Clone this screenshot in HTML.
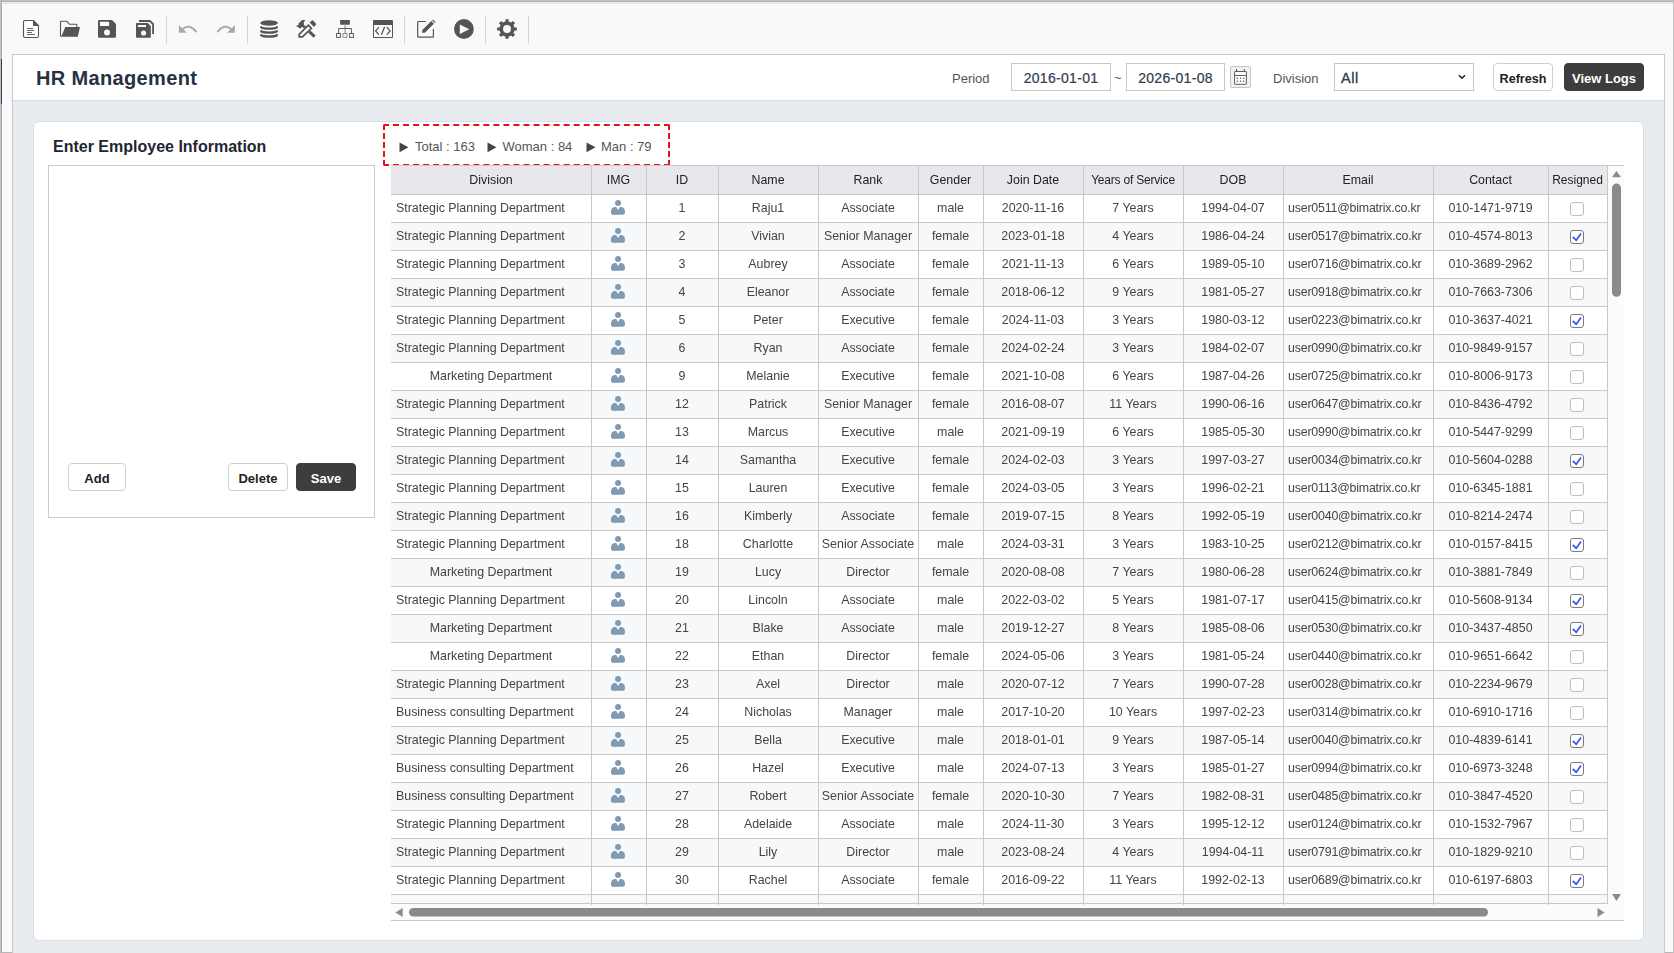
<!DOCTYPE html><html><head><meta charset="utf-8"><style>
*{box-sizing:border-box;margin:0;padding:0}
html,body{width:1674px;height:953px;overflow:hidden;background:#f8f9fa;font-family:"Liberation Sans",sans-serif;color:#333}
.a{position:absolute}
#frameT{position:absolute;left:0;top:0;width:1674px;height:2px;background:linear-gradient(#c3c3c3 50%,#b0b0b0 50%)}
#frameT2{position:absolute;left:2px;top:2px;width:1672px;height:1px;background:#e8eef8}
#frameT3{position:absolute;left:2px;top:3px;width:1672px;height:1px;background:#e3e5e3}
#frameL{position:absolute;left:0;top:0;width:2px;height:953px;background:linear-gradient(90deg,#c3c3c3 50%,#a9a9a9 50%)}
#frameL2{position:absolute;left:2px;top:2px;width:1px;height:950px;background:#fdfdfd}
#frameB{position:absolute;left:0;top:952px;width:1674px;height:1px;background:#b8b8b8}
#frameR{position:absolute;left:1673px;top:0;width:1px;height:953px;background:#c3c3c3}
#leftdark{position:absolute;left:1px;top:59px;width:1px;height:45px;background:#333a44}
#panel{position:absolute;left:12px;top:54px;width:1653px;height:899px;border-left:1px solid #c8c8c8;border-right:1px solid #c8c8c8;border-top:1px solid #c8c8c8;background:#e9ecef}
#hdr{position:absolute;left:13px;top:55px;width:1651px;height:46px;background:#fff;border-bottom:1px solid #d6dce6}
#card{position:absolute;left:33px;top:121px;width:1611px;height:820px;background:#fff;border:1px solid #d6dce8;border-radius:6px}
.t{position:absolute;white-space:nowrap;line-height:1}
.title{left:36px;top:68px;font-size:20px;font-weight:bold;color:#263142;letter-spacing:0.35px}
.lbl{font-size:13px;color:#555}
.inp{position:absolute;border:1px solid #c8c8c8;background:#fff;height:28px;top:63px}
.date{font-size:14px;color:#2f3b4e;line-height:28px;text-align:center;letter-spacing:0.3px;-webkit-text-stroke:0.2px #2f3b4e}
.btn{position:absolute;height:28px;border-radius:4px;font-size:13px;font-weight:bold;line-height:29px;text-align:center}
.bw{border:1px solid #cfcfcf;background:#fff;color:#222}
.bd{border:1px solid #3d3d3d;background:#3d3d3d;color:#fff}
#grid{position:absolute;left:391px;top:166px;width:1233px;height:754px;background:#fbfbfb}
.hl{position:absolute;height:1px;background:#c8c8c8}
.vl{position:absolute;width:1px;background:#c8c8c8}
.c{position:absolute;height:28px;line-height:28px;font-size:12.4px;color:#444;white-space:nowrap;text-align:center;overflow:hidden}
.h{color:#222;line-height:28px}
.cb{position:absolute;width:14px;height:14px;border:1px solid #bdbdbd;border-radius:3px;background:#fff}
.cb.on{border-color:#7a7a7a}
</style></head><body>
<div id="frameT"></div><div id="frameT2"></div><div id="frameT3"></div><div id="frameL"></div><div id="frameL2"></div><div id="frameB"></div><div id="frameR"></div>
<svg class="abs" style="left:0;top:0" width="560" height="54" viewBox="0 0 560 54">
<g fill="#555" stroke="none">
<!-- new doc -->
<path d="M23.5,22 Q23.5,20.5 25,20.5 L33.5,20.5 L38.5,25.5 L38.5,36 Q38.5,37.5 37,37.5 L25,37.5 Q23.5,37.5 23.5,36 Z" fill="#fff" stroke="#555" stroke-width="1.1"/>
<path d="M33,20 L39,26 L33,26 Z"/>
<g stroke="#555" stroke-width="0.9"><path d="M27,28.5H33M27,30.5H34M27,32.5H32M27,34.5H35"/></g>
<!-- folder -->
<path d="M60.5,36.5 L60.5,22 Q60.5,21.3 61.3,21.3 L66.8,21.3 L69.5,24.3 L76.3,24.3 Q76.8,24.3 76.8,24.8 L76.8,27.5" fill="none" stroke="#555" stroke-width="1.1"/>
<path d="M65.3,27.1 L80,27.1 L77.8,36.8 L60.8,36.8 L61.5,36 Z"/>
<path d="M60.5,36 L60.5,36.8 L62,36.8 Z"/>
<!-- save -->
<path d="M98,21.3 Q98,20 99.3,20 L112,20 L116,24 L116,36.5 Q116,37.8 114.7,37.8 L99.3,37.8 Q98,37.8 98,36.5 Z M99.9,21.7 L99.9,26.1 L109.1,26.1 L109.1,21.7 Z M104,32.4 A3,3 0 1 0 110,32.4 A3,3 0 1 0 104,32.4 Z" fill-rule="evenodd"/>
<!-- save all -->
<path d="M136,23.8 Q136,23.1 136.7,23.1 L147.8,23.1 L150.8,26.1 L150.8,37.1 Q150.8,37.8 150.1,37.8 L136.7,37.8 Q136,37.8 136,37.1 Z M137.9,25 L137.9,27 L146,27 L146,25 Z M141,33 A2.6,2.6 0 1 0 146.2,33 A2.6,2.6 0 1 0 141,33 Z" fill-rule="evenodd"/>
<path d="M139,20.1 L150.3,20.1 L154,23.8 L154,33.9 L152.2,33.9 L152.2,24.6 L149.6,21.9 L139,21.9 Z"/>
<!-- undo -->
<g fill="#aaa"><path d="M178.9,24.9 L178.9,32.8 L186.8,32.8 Z"/>
<path d="M182.5,29.2 Q189,23 196.5,32 " fill="none" stroke="#aaa" stroke-width="2"/>
<!-- redo -->
<path d="M234.9,24.9 L234.9,32.8 L227,32.8 Z"/>
<path d="M231.3,29.2 Q224.8,23 217.3,32 " fill="none" stroke="#aaa" stroke-width="2"/></g>
<!-- database -->
<ellipse cx="269.05" cy="22.95" rx="8.85" ry="2.8"/>
<g fill="none" stroke="#555" stroke-width="2.3" stroke-linecap="round"><path d="M261.2,27.2 A7.9,1.6 0 0 0 276.9,27.2"/><path d="M261.2,31.15 A7.9,1.6 0 0 0 276.9,31.15"/><path d="M261.2,35.1 A7.9,1.6 0 0 0 276.9,35.1"/></g>
<!-- tools -->
<path d="M302.96,27.58 L305.04,25.42 L315.64,35.52 L313.56,37.68 Z"/>
<path d="M296,26.1 L298.5,25 L298.5,23.6 L302,20.1 L305,20.1 L305,20.8 L303.8,22.1 L303.9,24.7 L305,25.8 L303.4,27.5 L302,26.9 L299.8,28.8 L299.3,28 Z"/>
<path d="M298.3,37.8 L298.3,34 L308.3,23.9 L312.6,28.3 L302.8,37.8 Z" fill="#fff"/>
<path d="M298.3,37.8 L298.3,34 L308.3,23.9 L312.6,28.3 L302.8,37.8 Z M300,36.1 L302.1,36.1 L310.2,28.3 L308.3,26.4 L300,34.7 Z" fill-rule="evenodd"/>
<path d="M309.6,22.5 L312,20.5 Q312.6,20.2 313.1,20.6 L315.9,23.6 Q316.3,24.1 315.9,24.7 L314,26.9 Z"/>
<!-- sitemap -->
<rect x="340.1" y="20" width="9.8" height="4.7" rx="0.6"/>
<rect x="344.5" y="24.7" width="1.2" height="8.5" fill="#999"/>
<g fill="none" stroke="#555" stroke-width="0.95"><path d="M338.6,33 V28.5 H351.4 V33"/>
<rect x="336.6" y="33.5" width="3.8" height="3.9"/><rect x="349.6" y="33.5" width="3.8" height="3.9"/></g>
<rect x="343" y="33.5" width="3.9" height="3.9" fill="none" stroke="#8a8a8a" stroke-width="0.95"/>
<!-- code window -->
<path d="M373,21 Q373,20 374,20 L392,20 Q393,20 393,21 L393,37 Q393,38 392,38 L374,38 Q373,38 373,37 Z M374,25 L374,37 L392,37 L392,25 Z" fill-rule="evenodd"/>
<g fill="none" stroke="#555" stroke-width="1.25"><path d="M378.9,27.1 L375.6,30.9 L378.9,34.7"/><path d="M384.6,27.1 L381.4,34.7"/><path d="M386.8,27.1 L390.1,30.9 L386.8,34.7"/></g>
<!-- edit -->
<path d="M425.8,21.5 L418.5,21.5 Q417.7,21.5 417.7,22.3 L417.7,36.4 Q417.7,37.2 418.5,37.2 L432.6,37.2 Q433.4,37.2 433.4,36.4 L433.4,29.1" fill="none" stroke="#555" stroke-width="1.2"/>
<path d="M422.2,32.7 L422.3,30.1 L431.3,21.1 L433.9,23.7 L424.9,32.7 Z"/>
<path d="M432,20.3 L432.9,19.5 L435.6,22.2 L434.7,23 Z"/>
<!-- play -->
<path d="M454,29 A9.9,9.9 0 1 0 473.8,29 A9.9,9.9 0 1 0 454,29 Z M459.8,24.6 L459.8,34 L469.2,29.3 Z" fill-rule="evenodd"/>
<!-- gear -->
<path fill-rule="evenodd" d="M505.40,21.57 L505.40,19.13 L508.60,19.13 L508.60,21.57 A7.60,7.60 0 0 1 511.12,22.62 L512.85,20.89 L515.11,23.15 L513.38,24.88 A7.60,7.60 0 0 1 514.43,27.40 L516.87,27.40 L516.87,30.60 L514.43,30.60 A7.60,7.60 0 0 1 513.38,33.12 L515.11,34.85 L512.85,37.11 L511.12,35.38 A7.60,7.60 0 0 1 508.60,36.43 L508.60,38.87 L505.40,38.87 L505.40,36.43 A7.60,7.60 0 0 1 502.88,35.38 L501.15,37.11 L498.89,34.85 L500.62,33.12 A7.60,7.60 0 0 1 499.57,30.60 L497.13,30.60 L497.13,27.40 L499.57,27.40 A7.60,7.60 0 0 1 500.62,24.88 L498.89,23.15 L501.15,20.89 L502.88,22.62 A7.60,7.60 0 0 1 505.40,21.57 Z M503.05,29.00 A3.95,3.95 0 1 0 510.95,29.00 A3.95,3.95 0 1 0 503.05,29.00 Z"/>
</g>
<g fill="#d4d4d4"><rect x="166" y="16" width="1" height="28"/><rect x="247" y="16" width="1" height="28"/><rect x="404" y="16" width="1" height="28"/><rect x="485" y="16" width="1" height="28"/><rect x="528" y="16" width="1" height="28"/></g>
</svg>
<div id="panel"></div><div id="hdr"></div><div id="leftdark"></div><div id="card"></div>
<div class="t title">HR Management</div>
<div class="t lbl" style="left:952px;top:72px">Period</div>
<div class="inp date" style="left:1011px;width:100px">2016-01-01</div>
<div class="t lbl" style="left:1114px;top:71px">~</div>
<div class="inp date" style="left:1126px;width:99px">2026-01-08</div>
<div class="a" style="left:1230px;top:66px;width:21px;height:22px;border:1px solid #c6c6c6;border-radius:2px;background:#f1f1f3"></div>
<svg class="a" style="left:1230px;top:66px" width="21" height="22" viewBox="0 0 21 22"><rect x="4.6" y="5.5" width="11.8" height="12.8" rx="0.4" fill="#fff" stroke="#555" stroke-width="0.95"/><rect x="4.6" y="9" width="11.8" height="0.9" fill="#555"/><rect x="6" y="3.1" width="1.1" height="2.6" fill="#555"/><rect x="13.8" y="3.1" width="1.1" height="2.6" fill="#555"/><g fill="#555"><circle cx="7.3" cy="12.2" r="0.75"/><circle cx="10.5" cy="12.2" r="0.75"/><circle cx="13.7" cy="12.2" r="0.75"/><circle cx="7.3" cy="15.2" r="0.75"/><circle cx="10.5" cy="15.2" r="0.75"/><circle cx="13.7" cy="15.2" r="0.75"/></g></svg>
<div class="t lbl" style="left:1273px;top:72px">Division</div>
<div class="inp" style="left:1334px;width:140px;border-color:#c4c4c4"></div>
<div class="t" style="left:1341px;top:71px;font-size:14.5px;color:#2f3b4e;letter-spacing:0.6px;-webkit-text-stroke:0.35px #2f3b4e">All</div>
<svg class="a" style="left:1456px;top:72px" width="12" height="10" viewBox="0 0 12 10"><path d="M3,3.2 L6,6.2 L9,3.2" fill="none" stroke="#222" stroke-width="1.6"/></svg>
<div class="btn bw" style="left:1493px;top:63px;width:60px;font-size:12.6px;line-height:30px">Refresh</div>
<div class="btn bd" style="left:1564px;top:63px;width:80px">View Logs</div>
<div class="t" style="left:53px;top:139px;font-size:16px;font-weight:bold;color:#1f2533">Enter Employee Information</div>
<div class="a" style="left:48px;top:165px;width:327px;height:353px;border:1px solid #cccccc"></div>
<div class="btn bw" style="left:68px;top:463px;width:58px">Add</div>
<div class="btn bw" style="left:228px;top:463px;width:60px">Delete</div>
<div class="btn bd" style="left:296px;top:463px;width:60px">Save</div>
<div class="a" style="left:383px;top:124px;width:287px;height:42px;border:2px dashed #e5141c;border-radius:2px"></div>
<svg class="a" style="left:398.5px;top:142px" width="10" height="11" viewBox="0 0 10 11"><path d="M0.5,0.5 L9.5,5.3 L0.5,10.2 Z" fill="#444"/></svg>
<div class="t" style="left:415px;top:140px;font-size:13px;color:#555">Total : 163</div>
<svg class="a" style="left:487px;top:142px" width="10" height="11" viewBox="0 0 10 11"><path d="M0.5,0.5 L9.5,5.3 L0.5,10.2 Z" fill="#444"/></svg>
<div class="t" style="left:502.5px;top:140px;font-size:13px;color:#555">Woman : 84</div>
<svg class="a" style="left:585.5px;top:142px" width="10" height="11" viewBox="0 0 10 11"><path d="M0.5,0.5 L9.5,5.3 L0.5,10.2 Z" fill="#444"/></svg>
<div class="t" style="left:601px;top:140px;font-size:13px;color:#555">Man : 79</div>
<div id="grid"></div>
<div class="hl" style="left:391px;top:165px;width:1233px"></div>
<div class="hl" style="left:391px;top:920px;width:1233px"></div>
<div class="a" style="left:391px;top:166px;width:1216px;height:28px;background:#e8e8ec"></div>
<div class="a" style="left:391px;top:195px;width:1216px;height:27px;background:#ffffff"></div>
<div class="a" style="left:391px;top:223px;width:1216px;height:27px;background:#f7f8fa"></div>
<div class="a" style="left:391px;top:251px;width:1216px;height:27px;background:#ffffff"></div>
<div class="a" style="left:391px;top:279px;width:1216px;height:27px;background:#f7f8fa"></div>
<div class="a" style="left:391px;top:307px;width:1216px;height:27px;background:#ffffff"></div>
<div class="a" style="left:391px;top:335px;width:1216px;height:27px;background:#f7f8fa"></div>
<div class="a" style="left:391px;top:363px;width:1216px;height:27px;background:#ffffff"></div>
<div class="a" style="left:391px;top:391px;width:1216px;height:27px;background:#f7f8fa"></div>
<div class="a" style="left:391px;top:419px;width:1216px;height:27px;background:#ffffff"></div>
<div class="a" style="left:391px;top:447px;width:1216px;height:27px;background:#f7f8fa"></div>
<div class="a" style="left:391px;top:475px;width:1216px;height:27px;background:#ffffff"></div>
<div class="a" style="left:391px;top:503px;width:1216px;height:27px;background:#f7f8fa"></div>
<div class="a" style="left:391px;top:531px;width:1216px;height:27px;background:#ffffff"></div>
<div class="a" style="left:391px;top:559px;width:1216px;height:27px;background:#f7f8fa"></div>
<div class="a" style="left:391px;top:587px;width:1216px;height:27px;background:#ffffff"></div>
<div class="a" style="left:391px;top:615px;width:1216px;height:27px;background:#f7f8fa"></div>
<div class="a" style="left:391px;top:643px;width:1216px;height:27px;background:#ffffff"></div>
<div class="a" style="left:391px;top:671px;width:1216px;height:27px;background:#f7f8fa"></div>
<div class="a" style="left:391px;top:699px;width:1216px;height:27px;background:#ffffff"></div>
<div class="a" style="left:391px;top:727px;width:1216px;height:27px;background:#f7f8fa"></div>
<div class="a" style="left:391px;top:755px;width:1216px;height:27px;background:#ffffff"></div>
<div class="a" style="left:391px;top:783px;width:1216px;height:27px;background:#f7f8fa"></div>
<div class="a" style="left:391px;top:811px;width:1216px;height:27px;background:#ffffff"></div>
<div class="a" style="left:391px;top:839px;width:1216px;height:27px;background:#f7f8fa"></div>
<div class="a" style="left:391px;top:867px;width:1216px;height:27px;background:#ffffff"></div>
<div class="a" style="left:391px;top:895px;width:1216px;height:8px;background:#f7f8fa"></div>
<div class="hl" style="left:391px;top:194px;width:1218px"></div>
<div class="hl" style="left:391px;top:222px;width:1218px"></div>
<div class="hl" style="left:391px;top:250px;width:1218px"></div>
<div class="hl" style="left:391px;top:278px;width:1218px"></div>
<div class="hl" style="left:391px;top:306px;width:1218px"></div>
<div class="hl" style="left:391px;top:334px;width:1218px"></div>
<div class="hl" style="left:391px;top:362px;width:1218px"></div>
<div class="hl" style="left:391px;top:390px;width:1218px"></div>
<div class="hl" style="left:391px;top:418px;width:1218px"></div>
<div class="hl" style="left:391px;top:446px;width:1218px"></div>
<div class="hl" style="left:391px;top:474px;width:1218px"></div>
<div class="hl" style="left:391px;top:502px;width:1218px"></div>
<div class="hl" style="left:391px;top:530px;width:1218px"></div>
<div class="hl" style="left:391px;top:558px;width:1218px"></div>
<div class="hl" style="left:391px;top:586px;width:1218px"></div>
<div class="hl" style="left:391px;top:614px;width:1218px"></div>
<div class="hl" style="left:391px;top:642px;width:1218px"></div>
<div class="hl" style="left:391px;top:670px;width:1218px"></div>
<div class="hl" style="left:391px;top:698px;width:1218px"></div>
<div class="hl" style="left:391px;top:726px;width:1218px"></div>
<div class="hl" style="left:391px;top:754px;width:1218px"></div>
<div class="hl" style="left:391px;top:782px;width:1218px"></div>
<div class="hl" style="left:391px;top:810px;width:1218px"></div>
<div class="hl" style="left:391px;top:838px;width:1218px"></div>
<div class="hl" style="left:391px;top:866px;width:1218px"></div>
<div class="hl" style="left:391px;top:894px;width:1218px"></div>
<div class="hl" style="left:391px;top:903px;width:1217px"></div>
<div class="vl" style="left:591px;top:166px;height:739px"></div>
<div class="vl" style="left:646px;top:166px;height:739px"></div>
<div class="vl" style="left:718px;top:166px;height:739px"></div>
<div class="vl" style="left:818px;top:166px;height:739px"></div>
<div class="vl" style="left:918px;top:166px;height:739px"></div>
<div class="vl" style="left:983px;top:166px;height:739px"></div>
<div class="vl" style="left:1083px;top:166px;height:739px"></div>
<div class="vl" style="left:1183px;top:166px;height:739px"></div>
<div class="vl" style="left:1283px;top:166px;height:739px"></div>
<div class="vl" style="left:1433px;top:166px;height:739px"></div>
<div class="vl" style="left:1548px;top:166px;height:739px"></div>
<div class="vl" style="left:1607px;top:166px;height:737px"></div>
<div style="position:absolute;left:0;top:0;width:1674px;height:953px;will-change:transform">
<div class="c h" style="left:391px;top:166px;width:200px">Division</div>
<div class="c h" style="left:591px;top:166px;width:55px">IMG</div>
<div class="c h" style="left:646px;top:166px;width:72px">ID</div>
<div class="c h" style="left:718px;top:166px;width:100px">Name</div>
<div class="c h" style="left:818px;top:166px;width:100px">Rank</div>
<div class="c h" style="left:918px;top:166px;width:65px">Gender</div>
<div class="c h" style="left:983px;top:166px;width:100px">Join Date</div>
<div class="c h" style="left:1083px;top:166px;width:100px;font-size:12px;letter-spacing:-0.2px">Years of Service</div>
<div class="c h" style="left:1183px;top:166px;width:100px">DOB</div>
<div class="c h" style="left:1283px;top:166px;width:150px">Email</div>
<div class="c h" style="left:1433px;top:166px;width:115px">Contact</div>
<div class="c h" style="left:1548px;top:166px;width:59px;font-size:12px">Resigned</div>
<div class="c" style="left:391px;top:194px;width:200px;text-align:left;padding-left:5px">Strategic Planning Department</div>
<svg class="a" style="left:610px;top:199px" width="16" height="17" viewBox="0 0 16 17"><circle cx="8.05" cy="3.9" r="3.0" fill="#7f9bb3"/><path d="M0.9,13.5 Q0.9,8.2 4.5,8.1 L6.2,8.1 L8.05,10.9 L9.9,8.1 L11.4,8.1 Q15,8.2 15,13.5 Q15,15.7 13,15.7 L2.9,15.7 Q0.9,15.7 0.9,13.5 Z" fill="#7f9bb3"/></svg>
<div class="c" style="left:646px;top:194px;width:72px">1</div>
<div class="c" style="left:718px;top:194px;width:100px">Raju1</div>
<div class="c" style="left:818px;top:194px;width:100px">Associate</div>
<div class="c" style="left:918px;top:194px;width:65px">male</div>
<div class="c" style="left:983px;top:194px;width:100px">2020-11-16</div>
<div class="c" style="left:1083px;top:194px;width:100px">7 Years</div>
<div class="c" style="left:1183px;top:194px;width:100px">1994-04-07</div>
<div class="c" style="left:1283px;top:194px;width:150px;text-align:left;padding-left:5px;letter-spacing:-0.2px">user0511@bimatrix.co.kr</div>
<div class="c" style="left:1433px;top:194px;width:115px">010-1471-9719</div>
<div class="cb" style="left:1570px;top:202px"></div>
<div class="c" style="left:391px;top:222px;width:200px;text-align:left;padding-left:5px">Strategic Planning Department</div>
<svg class="a" style="left:610px;top:227px" width="16" height="17" viewBox="0 0 16 17"><circle cx="8.05" cy="3.9" r="3.0" fill="#7f9bb3"/><path d="M0.9,13.5 Q0.9,8.2 4.5,8.1 L6.2,8.1 L8.05,10.9 L9.9,8.1 L11.4,8.1 Q15,8.2 15,13.5 Q15,15.7 13,15.7 L2.9,15.7 Q0.9,15.7 0.9,13.5 Z" fill="#7f9bb3"/></svg>
<div class="c" style="left:646px;top:222px;width:72px">2</div>
<div class="c" style="left:718px;top:222px;width:100px">Vivian</div>
<div class="c" style="left:818px;top:222px;width:100px">Senior Manager</div>
<div class="c" style="left:918px;top:222px;width:65px">female</div>
<div class="c" style="left:983px;top:222px;width:100px">2023-01-18</div>
<div class="c" style="left:1083px;top:222px;width:100px">4 Years</div>
<div class="c" style="left:1183px;top:222px;width:100px">1986-04-24</div>
<div class="c" style="left:1283px;top:222px;width:150px;text-align:left;padding-left:5px;letter-spacing:-0.2px">user0517@bimatrix.co.kr</div>
<div class="c" style="left:1433px;top:222px;width:115px">010-4574-8013</div>
<div class="cb on" style="left:1570px;top:230px"></div>
<svg class="a" style="left:1570px;top:230px" width="14" height="14" viewBox="0 0 14 14"><path d="M2.7,6.8 L6.2,10.2 L11,3.6" fill="none" stroke="#3556f0" stroke-width="1.7"/></svg>
<div class="c" style="left:391px;top:250px;width:200px;text-align:left;padding-left:5px">Strategic Planning Department</div>
<svg class="a" style="left:610px;top:255px" width="16" height="17" viewBox="0 0 16 17"><circle cx="8.05" cy="3.9" r="3.0" fill="#7f9bb3"/><path d="M0.9,13.5 Q0.9,8.2 4.5,8.1 L6.2,8.1 L8.05,10.9 L9.9,8.1 L11.4,8.1 Q15,8.2 15,13.5 Q15,15.7 13,15.7 L2.9,15.7 Q0.9,15.7 0.9,13.5 Z" fill="#7f9bb3"/></svg>
<div class="c" style="left:646px;top:250px;width:72px">3</div>
<div class="c" style="left:718px;top:250px;width:100px">Aubrey</div>
<div class="c" style="left:818px;top:250px;width:100px">Associate</div>
<div class="c" style="left:918px;top:250px;width:65px">female</div>
<div class="c" style="left:983px;top:250px;width:100px">2021-11-13</div>
<div class="c" style="left:1083px;top:250px;width:100px">6 Years</div>
<div class="c" style="left:1183px;top:250px;width:100px">1989-05-10</div>
<div class="c" style="left:1283px;top:250px;width:150px;text-align:left;padding-left:5px;letter-spacing:-0.2px">user0716@bimatrix.co.kr</div>
<div class="c" style="left:1433px;top:250px;width:115px">010-3689-2962</div>
<div class="cb" style="left:1570px;top:258px"></div>
<div class="c" style="left:391px;top:278px;width:200px;text-align:left;padding-left:5px">Strategic Planning Department</div>
<svg class="a" style="left:610px;top:283px" width="16" height="17" viewBox="0 0 16 17"><circle cx="8.05" cy="3.9" r="3.0" fill="#7f9bb3"/><path d="M0.9,13.5 Q0.9,8.2 4.5,8.1 L6.2,8.1 L8.05,10.9 L9.9,8.1 L11.4,8.1 Q15,8.2 15,13.5 Q15,15.7 13,15.7 L2.9,15.7 Q0.9,15.7 0.9,13.5 Z" fill="#7f9bb3"/></svg>
<div class="c" style="left:646px;top:278px;width:72px">4</div>
<div class="c" style="left:718px;top:278px;width:100px">Eleanor</div>
<div class="c" style="left:818px;top:278px;width:100px">Associate</div>
<div class="c" style="left:918px;top:278px;width:65px">female</div>
<div class="c" style="left:983px;top:278px;width:100px">2018-06-12</div>
<div class="c" style="left:1083px;top:278px;width:100px">9 Years</div>
<div class="c" style="left:1183px;top:278px;width:100px">1981-05-27</div>
<div class="c" style="left:1283px;top:278px;width:150px;text-align:left;padding-left:5px;letter-spacing:-0.2px">user0918@bimatrix.co.kr</div>
<div class="c" style="left:1433px;top:278px;width:115px">010-7663-7306</div>
<div class="cb" style="left:1570px;top:286px"></div>
<div class="c" style="left:391px;top:306px;width:200px;text-align:left;padding-left:5px">Strategic Planning Department</div>
<svg class="a" style="left:610px;top:311px" width="16" height="17" viewBox="0 0 16 17"><circle cx="8.05" cy="3.9" r="3.0" fill="#7f9bb3"/><path d="M0.9,13.5 Q0.9,8.2 4.5,8.1 L6.2,8.1 L8.05,10.9 L9.9,8.1 L11.4,8.1 Q15,8.2 15,13.5 Q15,15.7 13,15.7 L2.9,15.7 Q0.9,15.7 0.9,13.5 Z" fill="#7f9bb3"/></svg>
<div class="c" style="left:646px;top:306px;width:72px">5</div>
<div class="c" style="left:718px;top:306px;width:100px">Peter</div>
<div class="c" style="left:818px;top:306px;width:100px">Executive</div>
<div class="c" style="left:918px;top:306px;width:65px">female</div>
<div class="c" style="left:983px;top:306px;width:100px">2024-11-03</div>
<div class="c" style="left:1083px;top:306px;width:100px">3 Years</div>
<div class="c" style="left:1183px;top:306px;width:100px">1980-03-12</div>
<div class="c" style="left:1283px;top:306px;width:150px;text-align:left;padding-left:5px;letter-spacing:-0.2px">user0223@bimatrix.co.kr</div>
<div class="c" style="left:1433px;top:306px;width:115px">010-3637-4021</div>
<div class="cb on" style="left:1570px;top:314px"></div>
<svg class="a" style="left:1570px;top:314px" width="14" height="14" viewBox="0 0 14 14"><path d="M2.7,6.8 L6.2,10.2 L11,3.6" fill="none" stroke="#3556f0" stroke-width="1.7"/></svg>
<div class="c" style="left:391px;top:334px;width:200px;text-align:left;padding-left:5px">Strategic Planning Department</div>
<svg class="a" style="left:610px;top:339px" width="16" height="17" viewBox="0 0 16 17"><circle cx="8.05" cy="3.9" r="3.0" fill="#7f9bb3"/><path d="M0.9,13.5 Q0.9,8.2 4.5,8.1 L6.2,8.1 L8.05,10.9 L9.9,8.1 L11.4,8.1 Q15,8.2 15,13.5 Q15,15.7 13,15.7 L2.9,15.7 Q0.9,15.7 0.9,13.5 Z" fill="#7f9bb3"/></svg>
<div class="c" style="left:646px;top:334px;width:72px">6</div>
<div class="c" style="left:718px;top:334px;width:100px">Ryan</div>
<div class="c" style="left:818px;top:334px;width:100px">Associate</div>
<div class="c" style="left:918px;top:334px;width:65px">female</div>
<div class="c" style="left:983px;top:334px;width:100px">2024-02-24</div>
<div class="c" style="left:1083px;top:334px;width:100px">3 Years</div>
<div class="c" style="left:1183px;top:334px;width:100px">1984-02-07</div>
<div class="c" style="left:1283px;top:334px;width:150px;text-align:left;padding-left:5px;letter-spacing:-0.2px">user0990@bimatrix.co.kr</div>
<div class="c" style="left:1433px;top:334px;width:115px">010-9849-9157</div>
<div class="cb" style="left:1570px;top:342px"></div>
<div class="c" style="left:391px;top:362px;width:200px">Marketing Department</div>
<svg class="a" style="left:610px;top:367px" width="16" height="17" viewBox="0 0 16 17"><circle cx="8.05" cy="3.9" r="3.0" fill="#7f9bb3"/><path d="M0.9,13.5 Q0.9,8.2 4.5,8.1 L6.2,8.1 L8.05,10.9 L9.9,8.1 L11.4,8.1 Q15,8.2 15,13.5 Q15,15.7 13,15.7 L2.9,15.7 Q0.9,15.7 0.9,13.5 Z" fill="#7f9bb3"/></svg>
<div class="c" style="left:646px;top:362px;width:72px">9</div>
<div class="c" style="left:718px;top:362px;width:100px">Melanie</div>
<div class="c" style="left:818px;top:362px;width:100px">Executive</div>
<div class="c" style="left:918px;top:362px;width:65px">female</div>
<div class="c" style="left:983px;top:362px;width:100px">2021-10-08</div>
<div class="c" style="left:1083px;top:362px;width:100px">6 Years</div>
<div class="c" style="left:1183px;top:362px;width:100px">1987-04-26</div>
<div class="c" style="left:1283px;top:362px;width:150px;text-align:left;padding-left:5px;letter-spacing:-0.2px">user0725@bimatrix.co.kr</div>
<div class="c" style="left:1433px;top:362px;width:115px">010-8006-9173</div>
<div class="cb" style="left:1570px;top:370px"></div>
<div class="c" style="left:391px;top:390px;width:200px;text-align:left;padding-left:5px">Strategic Planning Department</div>
<svg class="a" style="left:610px;top:395px" width="16" height="17" viewBox="0 0 16 17"><circle cx="8.05" cy="3.9" r="3.0" fill="#7f9bb3"/><path d="M0.9,13.5 Q0.9,8.2 4.5,8.1 L6.2,8.1 L8.05,10.9 L9.9,8.1 L11.4,8.1 Q15,8.2 15,13.5 Q15,15.7 13,15.7 L2.9,15.7 Q0.9,15.7 0.9,13.5 Z" fill="#7f9bb3"/></svg>
<div class="c" style="left:646px;top:390px;width:72px">12</div>
<div class="c" style="left:718px;top:390px;width:100px">Patrick</div>
<div class="c" style="left:818px;top:390px;width:100px">Senior Manager</div>
<div class="c" style="left:918px;top:390px;width:65px">female</div>
<div class="c" style="left:983px;top:390px;width:100px">2016-08-07</div>
<div class="c" style="left:1083px;top:390px;width:100px">11 Years</div>
<div class="c" style="left:1183px;top:390px;width:100px">1990-06-16</div>
<div class="c" style="left:1283px;top:390px;width:150px;text-align:left;padding-left:5px;letter-spacing:-0.2px">user0647@bimatrix.co.kr</div>
<div class="c" style="left:1433px;top:390px;width:115px">010-8436-4792</div>
<div class="cb" style="left:1570px;top:398px"></div>
<div class="c" style="left:391px;top:418px;width:200px;text-align:left;padding-left:5px">Strategic Planning Department</div>
<svg class="a" style="left:610px;top:423px" width="16" height="17" viewBox="0 0 16 17"><circle cx="8.05" cy="3.9" r="3.0" fill="#7f9bb3"/><path d="M0.9,13.5 Q0.9,8.2 4.5,8.1 L6.2,8.1 L8.05,10.9 L9.9,8.1 L11.4,8.1 Q15,8.2 15,13.5 Q15,15.7 13,15.7 L2.9,15.7 Q0.9,15.7 0.9,13.5 Z" fill="#7f9bb3"/></svg>
<div class="c" style="left:646px;top:418px;width:72px">13</div>
<div class="c" style="left:718px;top:418px;width:100px">Marcus</div>
<div class="c" style="left:818px;top:418px;width:100px">Executive</div>
<div class="c" style="left:918px;top:418px;width:65px">male</div>
<div class="c" style="left:983px;top:418px;width:100px">2021-09-19</div>
<div class="c" style="left:1083px;top:418px;width:100px">6 Years</div>
<div class="c" style="left:1183px;top:418px;width:100px">1985-05-30</div>
<div class="c" style="left:1283px;top:418px;width:150px;text-align:left;padding-left:5px;letter-spacing:-0.2px">user0990@bimatrix.co.kr</div>
<div class="c" style="left:1433px;top:418px;width:115px">010-5447-9299</div>
<div class="cb" style="left:1570px;top:426px"></div>
<div class="c" style="left:391px;top:446px;width:200px;text-align:left;padding-left:5px">Strategic Planning Department</div>
<svg class="a" style="left:610px;top:451px" width="16" height="17" viewBox="0 0 16 17"><circle cx="8.05" cy="3.9" r="3.0" fill="#7f9bb3"/><path d="M0.9,13.5 Q0.9,8.2 4.5,8.1 L6.2,8.1 L8.05,10.9 L9.9,8.1 L11.4,8.1 Q15,8.2 15,13.5 Q15,15.7 13,15.7 L2.9,15.7 Q0.9,15.7 0.9,13.5 Z" fill="#7f9bb3"/></svg>
<div class="c" style="left:646px;top:446px;width:72px">14</div>
<div class="c" style="left:718px;top:446px;width:100px">Samantha</div>
<div class="c" style="left:818px;top:446px;width:100px">Executive</div>
<div class="c" style="left:918px;top:446px;width:65px">female</div>
<div class="c" style="left:983px;top:446px;width:100px">2024-02-03</div>
<div class="c" style="left:1083px;top:446px;width:100px">3 Years</div>
<div class="c" style="left:1183px;top:446px;width:100px">1997-03-27</div>
<div class="c" style="left:1283px;top:446px;width:150px;text-align:left;padding-left:5px;letter-spacing:-0.2px">user0034@bimatrix.co.kr</div>
<div class="c" style="left:1433px;top:446px;width:115px">010-5604-0288</div>
<div class="cb on" style="left:1570px;top:454px"></div>
<svg class="a" style="left:1570px;top:454px" width="14" height="14" viewBox="0 0 14 14"><path d="M2.7,6.8 L6.2,10.2 L11,3.6" fill="none" stroke="#3556f0" stroke-width="1.7"/></svg>
<div class="c" style="left:391px;top:474px;width:200px;text-align:left;padding-left:5px">Strategic Planning Department</div>
<svg class="a" style="left:610px;top:479px" width="16" height="17" viewBox="0 0 16 17"><circle cx="8.05" cy="3.9" r="3.0" fill="#7f9bb3"/><path d="M0.9,13.5 Q0.9,8.2 4.5,8.1 L6.2,8.1 L8.05,10.9 L9.9,8.1 L11.4,8.1 Q15,8.2 15,13.5 Q15,15.7 13,15.7 L2.9,15.7 Q0.9,15.7 0.9,13.5 Z" fill="#7f9bb3"/></svg>
<div class="c" style="left:646px;top:474px;width:72px">15</div>
<div class="c" style="left:718px;top:474px;width:100px">Lauren</div>
<div class="c" style="left:818px;top:474px;width:100px">Executive</div>
<div class="c" style="left:918px;top:474px;width:65px">female</div>
<div class="c" style="left:983px;top:474px;width:100px">2024-03-05</div>
<div class="c" style="left:1083px;top:474px;width:100px">3 Years</div>
<div class="c" style="left:1183px;top:474px;width:100px">1996-02-21</div>
<div class="c" style="left:1283px;top:474px;width:150px;text-align:left;padding-left:5px;letter-spacing:-0.2px">user0113@bimatrix.co.kr</div>
<div class="c" style="left:1433px;top:474px;width:115px">010-6345-1881</div>
<div class="cb" style="left:1570px;top:482px"></div>
<div class="c" style="left:391px;top:502px;width:200px;text-align:left;padding-left:5px">Strategic Planning Department</div>
<svg class="a" style="left:610px;top:507px" width="16" height="17" viewBox="0 0 16 17"><circle cx="8.05" cy="3.9" r="3.0" fill="#7f9bb3"/><path d="M0.9,13.5 Q0.9,8.2 4.5,8.1 L6.2,8.1 L8.05,10.9 L9.9,8.1 L11.4,8.1 Q15,8.2 15,13.5 Q15,15.7 13,15.7 L2.9,15.7 Q0.9,15.7 0.9,13.5 Z" fill="#7f9bb3"/></svg>
<div class="c" style="left:646px;top:502px;width:72px">16</div>
<div class="c" style="left:718px;top:502px;width:100px">Kimberly</div>
<div class="c" style="left:818px;top:502px;width:100px">Associate</div>
<div class="c" style="left:918px;top:502px;width:65px">female</div>
<div class="c" style="left:983px;top:502px;width:100px">2019-07-15</div>
<div class="c" style="left:1083px;top:502px;width:100px">8 Years</div>
<div class="c" style="left:1183px;top:502px;width:100px">1992-05-19</div>
<div class="c" style="left:1283px;top:502px;width:150px;text-align:left;padding-left:5px;letter-spacing:-0.2px">user0040@bimatrix.co.kr</div>
<div class="c" style="left:1433px;top:502px;width:115px">010-8214-2474</div>
<div class="cb" style="left:1570px;top:510px"></div>
<div class="c" style="left:391px;top:530px;width:200px;text-align:left;padding-left:5px">Strategic Planning Department</div>
<svg class="a" style="left:610px;top:535px" width="16" height="17" viewBox="0 0 16 17"><circle cx="8.05" cy="3.9" r="3.0" fill="#7f9bb3"/><path d="M0.9,13.5 Q0.9,8.2 4.5,8.1 L6.2,8.1 L8.05,10.9 L9.9,8.1 L11.4,8.1 Q15,8.2 15,13.5 Q15,15.7 13,15.7 L2.9,15.7 Q0.9,15.7 0.9,13.5 Z" fill="#7f9bb3"/></svg>
<div class="c" style="left:646px;top:530px;width:72px">18</div>
<div class="c" style="left:718px;top:530px;width:100px">Charlotte</div>
<div class="c" style="left:818px;top:530px;width:100px">Senior Associate</div>
<div class="c" style="left:918px;top:530px;width:65px">male</div>
<div class="c" style="left:983px;top:530px;width:100px">2024-03-31</div>
<div class="c" style="left:1083px;top:530px;width:100px">3 Years</div>
<div class="c" style="left:1183px;top:530px;width:100px">1983-10-25</div>
<div class="c" style="left:1283px;top:530px;width:150px;text-align:left;padding-left:5px;letter-spacing:-0.2px">user0212@bimatrix.co.kr</div>
<div class="c" style="left:1433px;top:530px;width:115px">010-0157-8415</div>
<div class="cb on" style="left:1570px;top:538px"></div>
<svg class="a" style="left:1570px;top:538px" width="14" height="14" viewBox="0 0 14 14"><path d="M2.7,6.8 L6.2,10.2 L11,3.6" fill="none" stroke="#3556f0" stroke-width="1.7"/></svg>
<div class="c" style="left:391px;top:558px;width:200px">Marketing Department</div>
<svg class="a" style="left:610px;top:563px" width="16" height="17" viewBox="0 0 16 17"><circle cx="8.05" cy="3.9" r="3.0" fill="#7f9bb3"/><path d="M0.9,13.5 Q0.9,8.2 4.5,8.1 L6.2,8.1 L8.05,10.9 L9.9,8.1 L11.4,8.1 Q15,8.2 15,13.5 Q15,15.7 13,15.7 L2.9,15.7 Q0.9,15.7 0.9,13.5 Z" fill="#7f9bb3"/></svg>
<div class="c" style="left:646px;top:558px;width:72px">19</div>
<div class="c" style="left:718px;top:558px;width:100px">Lucy</div>
<div class="c" style="left:818px;top:558px;width:100px">Director</div>
<div class="c" style="left:918px;top:558px;width:65px">female</div>
<div class="c" style="left:983px;top:558px;width:100px">2020-08-08</div>
<div class="c" style="left:1083px;top:558px;width:100px">7 Years</div>
<div class="c" style="left:1183px;top:558px;width:100px">1980-06-28</div>
<div class="c" style="left:1283px;top:558px;width:150px;text-align:left;padding-left:5px;letter-spacing:-0.2px">user0624@bimatrix.co.kr</div>
<div class="c" style="left:1433px;top:558px;width:115px">010-3881-7849</div>
<div class="cb" style="left:1570px;top:566px"></div>
<div class="c" style="left:391px;top:586px;width:200px;text-align:left;padding-left:5px">Strategic Planning Department</div>
<svg class="a" style="left:610px;top:591px" width="16" height="17" viewBox="0 0 16 17"><circle cx="8.05" cy="3.9" r="3.0" fill="#7f9bb3"/><path d="M0.9,13.5 Q0.9,8.2 4.5,8.1 L6.2,8.1 L8.05,10.9 L9.9,8.1 L11.4,8.1 Q15,8.2 15,13.5 Q15,15.7 13,15.7 L2.9,15.7 Q0.9,15.7 0.9,13.5 Z" fill="#7f9bb3"/></svg>
<div class="c" style="left:646px;top:586px;width:72px">20</div>
<div class="c" style="left:718px;top:586px;width:100px">Lincoln</div>
<div class="c" style="left:818px;top:586px;width:100px">Associate</div>
<div class="c" style="left:918px;top:586px;width:65px">male</div>
<div class="c" style="left:983px;top:586px;width:100px">2022-03-02</div>
<div class="c" style="left:1083px;top:586px;width:100px">5 Years</div>
<div class="c" style="left:1183px;top:586px;width:100px">1981-07-17</div>
<div class="c" style="left:1283px;top:586px;width:150px;text-align:left;padding-left:5px;letter-spacing:-0.2px">user0415@bimatrix.co.kr</div>
<div class="c" style="left:1433px;top:586px;width:115px">010-5608-9134</div>
<div class="cb on" style="left:1570px;top:594px"></div>
<svg class="a" style="left:1570px;top:594px" width="14" height="14" viewBox="0 0 14 14"><path d="M2.7,6.8 L6.2,10.2 L11,3.6" fill="none" stroke="#3556f0" stroke-width="1.7"/></svg>
<div class="c" style="left:391px;top:614px;width:200px">Marketing Department</div>
<svg class="a" style="left:610px;top:619px" width="16" height="17" viewBox="0 0 16 17"><circle cx="8.05" cy="3.9" r="3.0" fill="#7f9bb3"/><path d="M0.9,13.5 Q0.9,8.2 4.5,8.1 L6.2,8.1 L8.05,10.9 L9.9,8.1 L11.4,8.1 Q15,8.2 15,13.5 Q15,15.7 13,15.7 L2.9,15.7 Q0.9,15.7 0.9,13.5 Z" fill="#7f9bb3"/></svg>
<div class="c" style="left:646px;top:614px;width:72px">21</div>
<div class="c" style="left:718px;top:614px;width:100px">Blake</div>
<div class="c" style="left:818px;top:614px;width:100px">Associate</div>
<div class="c" style="left:918px;top:614px;width:65px">male</div>
<div class="c" style="left:983px;top:614px;width:100px">2019-12-27</div>
<div class="c" style="left:1083px;top:614px;width:100px">8 Years</div>
<div class="c" style="left:1183px;top:614px;width:100px">1985-08-06</div>
<div class="c" style="left:1283px;top:614px;width:150px;text-align:left;padding-left:5px;letter-spacing:-0.2px">user0530@bimatrix.co.kr</div>
<div class="c" style="left:1433px;top:614px;width:115px">010-3437-4850</div>
<div class="cb on" style="left:1570px;top:622px"></div>
<svg class="a" style="left:1570px;top:622px" width="14" height="14" viewBox="0 0 14 14"><path d="M2.7,6.8 L6.2,10.2 L11,3.6" fill="none" stroke="#3556f0" stroke-width="1.7"/></svg>
<div class="c" style="left:391px;top:642px;width:200px">Marketing Department</div>
<svg class="a" style="left:610px;top:647px" width="16" height="17" viewBox="0 0 16 17"><circle cx="8.05" cy="3.9" r="3.0" fill="#7f9bb3"/><path d="M0.9,13.5 Q0.9,8.2 4.5,8.1 L6.2,8.1 L8.05,10.9 L9.9,8.1 L11.4,8.1 Q15,8.2 15,13.5 Q15,15.7 13,15.7 L2.9,15.7 Q0.9,15.7 0.9,13.5 Z" fill="#7f9bb3"/></svg>
<div class="c" style="left:646px;top:642px;width:72px">22</div>
<div class="c" style="left:718px;top:642px;width:100px">Ethan</div>
<div class="c" style="left:818px;top:642px;width:100px">Director</div>
<div class="c" style="left:918px;top:642px;width:65px">female</div>
<div class="c" style="left:983px;top:642px;width:100px">2024-05-06</div>
<div class="c" style="left:1083px;top:642px;width:100px">3 Years</div>
<div class="c" style="left:1183px;top:642px;width:100px">1981-05-24</div>
<div class="c" style="left:1283px;top:642px;width:150px;text-align:left;padding-left:5px;letter-spacing:-0.2px">user0440@bimatrix.co.kr</div>
<div class="c" style="left:1433px;top:642px;width:115px">010-9651-6642</div>
<div class="cb" style="left:1570px;top:650px"></div>
<div class="c" style="left:391px;top:670px;width:200px;text-align:left;padding-left:5px">Strategic Planning Department</div>
<svg class="a" style="left:610px;top:675px" width="16" height="17" viewBox="0 0 16 17"><circle cx="8.05" cy="3.9" r="3.0" fill="#7f9bb3"/><path d="M0.9,13.5 Q0.9,8.2 4.5,8.1 L6.2,8.1 L8.05,10.9 L9.9,8.1 L11.4,8.1 Q15,8.2 15,13.5 Q15,15.7 13,15.7 L2.9,15.7 Q0.9,15.7 0.9,13.5 Z" fill="#7f9bb3"/></svg>
<div class="c" style="left:646px;top:670px;width:72px">23</div>
<div class="c" style="left:718px;top:670px;width:100px">Axel</div>
<div class="c" style="left:818px;top:670px;width:100px">Director</div>
<div class="c" style="left:918px;top:670px;width:65px">male</div>
<div class="c" style="left:983px;top:670px;width:100px">2020-07-12</div>
<div class="c" style="left:1083px;top:670px;width:100px">7 Years</div>
<div class="c" style="left:1183px;top:670px;width:100px">1990-07-28</div>
<div class="c" style="left:1283px;top:670px;width:150px;text-align:left;padding-left:5px;letter-spacing:-0.2px">user0028@bimatrix.co.kr</div>
<div class="c" style="left:1433px;top:670px;width:115px">010-2234-9679</div>
<div class="cb" style="left:1570px;top:678px"></div>
<div class="c" style="left:391px;top:698px;width:200px;text-align:left;padding-left:5px">Business consulting Department</div>
<svg class="a" style="left:610px;top:703px" width="16" height="17" viewBox="0 0 16 17"><circle cx="8.05" cy="3.9" r="3.0" fill="#7f9bb3"/><path d="M0.9,13.5 Q0.9,8.2 4.5,8.1 L6.2,8.1 L8.05,10.9 L9.9,8.1 L11.4,8.1 Q15,8.2 15,13.5 Q15,15.7 13,15.7 L2.9,15.7 Q0.9,15.7 0.9,13.5 Z" fill="#7f9bb3"/></svg>
<div class="c" style="left:646px;top:698px;width:72px">24</div>
<div class="c" style="left:718px;top:698px;width:100px">Nicholas</div>
<div class="c" style="left:818px;top:698px;width:100px">Manager</div>
<div class="c" style="left:918px;top:698px;width:65px">male</div>
<div class="c" style="left:983px;top:698px;width:100px">2017-10-20</div>
<div class="c" style="left:1083px;top:698px;width:100px">10 Years</div>
<div class="c" style="left:1183px;top:698px;width:100px">1997-02-23</div>
<div class="c" style="left:1283px;top:698px;width:150px;text-align:left;padding-left:5px;letter-spacing:-0.2px">user0314@bimatrix.co.kr</div>
<div class="c" style="left:1433px;top:698px;width:115px">010-6910-1716</div>
<div class="cb" style="left:1570px;top:706px"></div>
<div class="c" style="left:391px;top:726px;width:200px;text-align:left;padding-left:5px">Strategic Planning Department</div>
<svg class="a" style="left:610px;top:731px" width="16" height="17" viewBox="0 0 16 17"><circle cx="8.05" cy="3.9" r="3.0" fill="#7f9bb3"/><path d="M0.9,13.5 Q0.9,8.2 4.5,8.1 L6.2,8.1 L8.05,10.9 L9.9,8.1 L11.4,8.1 Q15,8.2 15,13.5 Q15,15.7 13,15.7 L2.9,15.7 Q0.9,15.7 0.9,13.5 Z" fill="#7f9bb3"/></svg>
<div class="c" style="left:646px;top:726px;width:72px">25</div>
<div class="c" style="left:718px;top:726px;width:100px">Bella</div>
<div class="c" style="left:818px;top:726px;width:100px">Executive</div>
<div class="c" style="left:918px;top:726px;width:65px">male</div>
<div class="c" style="left:983px;top:726px;width:100px">2018-01-01</div>
<div class="c" style="left:1083px;top:726px;width:100px">9 Years</div>
<div class="c" style="left:1183px;top:726px;width:100px">1987-05-14</div>
<div class="c" style="left:1283px;top:726px;width:150px;text-align:left;padding-left:5px;letter-spacing:-0.2px">user0040@bimatrix.co.kr</div>
<div class="c" style="left:1433px;top:726px;width:115px">010-4839-6141</div>
<div class="cb on" style="left:1570px;top:734px"></div>
<svg class="a" style="left:1570px;top:734px" width="14" height="14" viewBox="0 0 14 14"><path d="M2.7,6.8 L6.2,10.2 L11,3.6" fill="none" stroke="#3556f0" stroke-width="1.7"/></svg>
<div class="c" style="left:391px;top:754px;width:200px;text-align:left;padding-left:5px">Business consulting Department</div>
<svg class="a" style="left:610px;top:759px" width="16" height="17" viewBox="0 0 16 17"><circle cx="8.05" cy="3.9" r="3.0" fill="#7f9bb3"/><path d="M0.9,13.5 Q0.9,8.2 4.5,8.1 L6.2,8.1 L8.05,10.9 L9.9,8.1 L11.4,8.1 Q15,8.2 15,13.5 Q15,15.7 13,15.7 L2.9,15.7 Q0.9,15.7 0.9,13.5 Z" fill="#7f9bb3"/></svg>
<div class="c" style="left:646px;top:754px;width:72px">26</div>
<div class="c" style="left:718px;top:754px;width:100px">Hazel</div>
<div class="c" style="left:818px;top:754px;width:100px">Executive</div>
<div class="c" style="left:918px;top:754px;width:65px">male</div>
<div class="c" style="left:983px;top:754px;width:100px">2024-07-13</div>
<div class="c" style="left:1083px;top:754px;width:100px">3 Years</div>
<div class="c" style="left:1183px;top:754px;width:100px">1985-01-27</div>
<div class="c" style="left:1283px;top:754px;width:150px;text-align:left;padding-left:5px;letter-spacing:-0.2px">user0994@bimatrix.co.kr</div>
<div class="c" style="left:1433px;top:754px;width:115px">010-6973-3248</div>
<div class="cb on" style="left:1570px;top:762px"></div>
<svg class="a" style="left:1570px;top:762px" width="14" height="14" viewBox="0 0 14 14"><path d="M2.7,6.8 L6.2,10.2 L11,3.6" fill="none" stroke="#3556f0" stroke-width="1.7"/></svg>
<div class="c" style="left:391px;top:782px;width:200px;text-align:left;padding-left:5px">Business consulting Department</div>
<svg class="a" style="left:610px;top:787px" width="16" height="17" viewBox="0 0 16 17"><circle cx="8.05" cy="3.9" r="3.0" fill="#7f9bb3"/><path d="M0.9,13.5 Q0.9,8.2 4.5,8.1 L6.2,8.1 L8.05,10.9 L9.9,8.1 L11.4,8.1 Q15,8.2 15,13.5 Q15,15.7 13,15.7 L2.9,15.7 Q0.9,15.7 0.9,13.5 Z" fill="#7f9bb3"/></svg>
<div class="c" style="left:646px;top:782px;width:72px">27</div>
<div class="c" style="left:718px;top:782px;width:100px">Robert</div>
<div class="c" style="left:818px;top:782px;width:100px">Senior Associate</div>
<div class="c" style="left:918px;top:782px;width:65px">female</div>
<div class="c" style="left:983px;top:782px;width:100px">2020-10-30</div>
<div class="c" style="left:1083px;top:782px;width:100px">7 Years</div>
<div class="c" style="left:1183px;top:782px;width:100px">1982-08-31</div>
<div class="c" style="left:1283px;top:782px;width:150px;text-align:left;padding-left:5px;letter-spacing:-0.2px">user0485@bimatrix.co.kr</div>
<div class="c" style="left:1433px;top:782px;width:115px">010-3847-4520</div>
<div class="cb" style="left:1570px;top:790px"></div>
<div class="c" style="left:391px;top:810px;width:200px;text-align:left;padding-left:5px">Strategic Planning Department</div>
<svg class="a" style="left:610px;top:815px" width="16" height="17" viewBox="0 0 16 17"><circle cx="8.05" cy="3.9" r="3.0" fill="#7f9bb3"/><path d="M0.9,13.5 Q0.9,8.2 4.5,8.1 L6.2,8.1 L8.05,10.9 L9.9,8.1 L11.4,8.1 Q15,8.2 15,13.5 Q15,15.7 13,15.7 L2.9,15.7 Q0.9,15.7 0.9,13.5 Z" fill="#7f9bb3"/></svg>
<div class="c" style="left:646px;top:810px;width:72px">28</div>
<div class="c" style="left:718px;top:810px;width:100px">Adelaide</div>
<div class="c" style="left:818px;top:810px;width:100px">Associate</div>
<div class="c" style="left:918px;top:810px;width:65px">male</div>
<div class="c" style="left:983px;top:810px;width:100px">2024-11-30</div>
<div class="c" style="left:1083px;top:810px;width:100px">3 Years</div>
<div class="c" style="left:1183px;top:810px;width:100px">1995-12-12</div>
<div class="c" style="left:1283px;top:810px;width:150px;text-align:left;padding-left:5px;letter-spacing:-0.2px">user0124@bimatrix.co.kr</div>
<div class="c" style="left:1433px;top:810px;width:115px">010-1532-7967</div>
<div class="cb" style="left:1570px;top:818px"></div>
<div class="c" style="left:391px;top:838px;width:200px;text-align:left;padding-left:5px">Strategic Planning Department</div>
<svg class="a" style="left:610px;top:843px" width="16" height="17" viewBox="0 0 16 17"><circle cx="8.05" cy="3.9" r="3.0" fill="#7f9bb3"/><path d="M0.9,13.5 Q0.9,8.2 4.5,8.1 L6.2,8.1 L8.05,10.9 L9.9,8.1 L11.4,8.1 Q15,8.2 15,13.5 Q15,15.7 13,15.7 L2.9,15.7 Q0.9,15.7 0.9,13.5 Z" fill="#7f9bb3"/></svg>
<div class="c" style="left:646px;top:838px;width:72px">29</div>
<div class="c" style="left:718px;top:838px;width:100px">Lily</div>
<div class="c" style="left:818px;top:838px;width:100px">Director</div>
<div class="c" style="left:918px;top:838px;width:65px">male</div>
<div class="c" style="left:983px;top:838px;width:100px">2023-08-24</div>
<div class="c" style="left:1083px;top:838px;width:100px">4 Years</div>
<div class="c" style="left:1183px;top:838px;width:100px">1994-04-11</div>
<div class="c" style="left:1283px;top:838px;width:150px;text-align:left;padding-left:5px;letter-spacing:-0.2px">user0791@bimatrix.co.kr</div>
<div class="c" style="left:1433px;top:838px;width:115px">010-1829-9210</div>
<div class="cb" style="left:1570px;top:846px"></div>
<div class="c" style="left:391px;top:866px;width:200px;text-align:left;padding-left:5px">Strategic Planning Department</div>
<svg class="a" style="left:610px;top:871px" width="16" height="17" viewBox="0 0 16 17"><circle cx="8.05" cy="3.9" r="3.0" fill="#7f9bb3"/><path d="M0.9,13.5 Q0.9,8.2 4.5,8.1 L6.2,8.1 L8.05,10.9 L9.9,8.1 L11.4,8.1 Q15,8.2 15,13.5 Q15,15.7 13,15.7 L2.9,15.7 Q0.9,15.7 0.9,13.5 Z" fill="#7f9bb3"/></svg>
<div class="c" style="left:646px;top:866px;width:72px">30</div>
<div class="c" style="left:718px;top:866px;width:100px">Rachel</div>
<div class="c" style="left:818px;top:866px;width:100px">Associate</div>
<div class="c" style="left:918px;top:866px;width:65px">female</div>
<div class="c" style="left:983px;top:866px;width:100px">2016-09-22</div>
<div class="c" style="left:1083px;top:866px;width:100px">11 Years</div>
<div class="c" style="left:1183px;top:866px;width:100px">1992-02-13</div>
<div class="c" style="left:1283px;top:866px;width:150px;text-align:left;padding-left:5px;letter-spacing:-0.2px">user0689@bimatrix.co.kr</div>
<div class="c" style="left:1433px;top:866px;width:115px">010-6197-6803</div>
<div class="cb on" style="left:1570px;top:874px"></div>
<svg class="a" style="left:1570px;top:874px" width="14" height="14" viewBox="0 0 14 14"><path d="M2.7,6.8 L6.2,10.2 L11,3.6" fill="none" stroke="#3556f0" stroke-width="1.7"/></svg>
</div>
<div class="a" style="left:1607px;top:166px;width:17px;height:754px;background:#fbfbfb"></div>
<div class="vl" style="left:1607px;top:166px;height:738px"></div>
<svg class="a" style="left:1608px;top:166px" width="16" height="754" viewBox="0 0 16 754"><path d="M4,11.3 L8.5,5 L13,11.3 Z" fill="#8a8a8a"/><rect x="4" y="17.6" width="9" height="113.2" rx="4.5" fill="#8a8a8a"/><path d="M4,728.1 L13,728.1 L8.5,734.9 Z" fill="#8a8a8a"/></svg>
<svg class="a" style="left:391px;top:904px" width="1233" height="16" viewBox="0 0 1233 16"><path d="M11.7,4 L4.4,8.5 L11.7,13 Z" fill="#8a8a8a"/><rect x="18" y="4" width="1079" height="8.5" rx="4.25" fill="#8a8a8a"/><path d="M206.5,4 L213.6,8.5 L206.5,13 Z" fill="#8a8a8a" transform="translate(1000,0)"/></svg>
</body></html>
